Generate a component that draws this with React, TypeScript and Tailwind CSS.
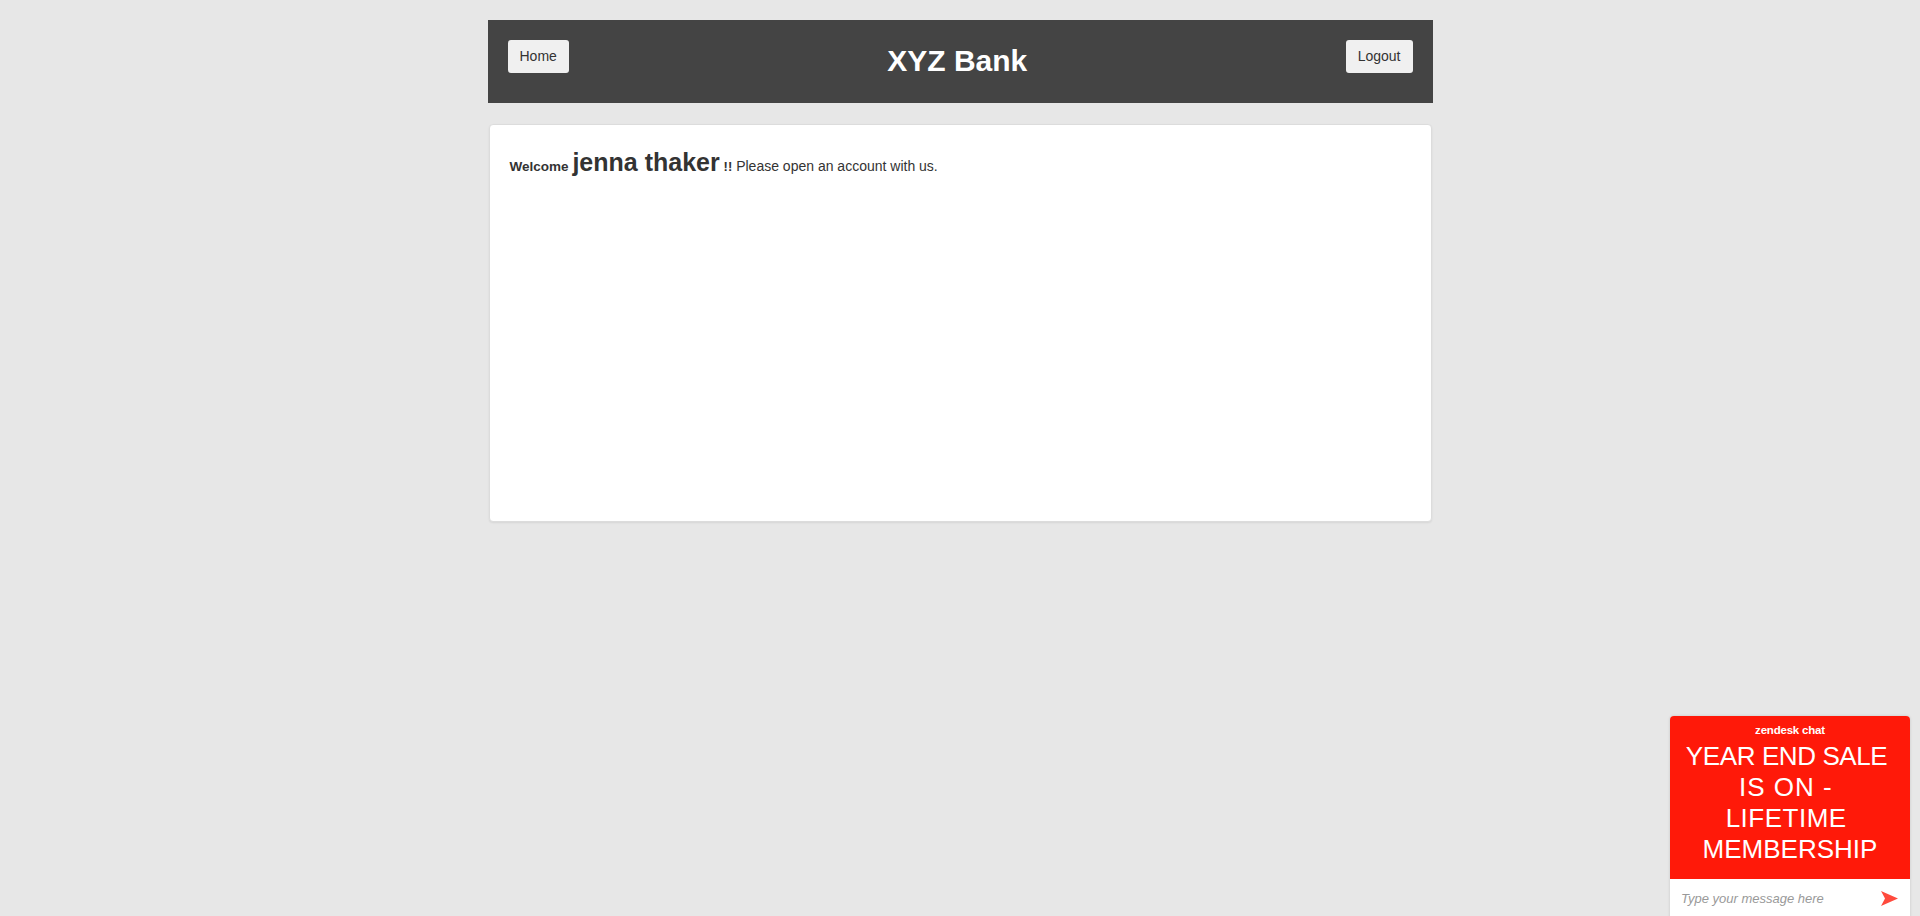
import React from 'react';

const ChatWidget: React.FC = () => {
  return (
    <div className="fixed right-[10px] top-[716px] w-[240px] rounded-t-[4px] overflow-hidden shadow-[0_0_3px_rgba(0,0,0,0.15)]">
      <div className="bg-[#ff1909] h-[163px] text-white text-center">
        <div className="pt-[7px] text-[11.5px] font-bold leading-[14px] tracking-[-0.2px]">zendesk chat</div>
        <div className="mt-[4px] text-[26px] leading-[31px]">
          <div className="tracking-[-0.4px]">YEAR END SALE&nbsp;</div>
          <div className="tracking-[1px]">IS ON -&nbsp;</div>
          <div className="tracking-[0.5px]">LIFETIME&nbsp;</div>
          <div>MEMBERSHIP</div>
        </div>
      </div>
      <div className="bg-white h-[40px] flex items-center pl-[11px] pr-[12px]">
        <span className="flex-1 text-[13px] italic text-[#999]">Type your message here</span>
        <svg width="17" height="15" viewBox="0 0 17 15" className="mt-[-1px]">
          <path d="M0 0 L17 7.5 L0 15 L4 7.5 Z" fill="#ff4a3d" />
        </svg>
      </div>
    </div>
  );
};

export default function App() {
  return (
    <div className="min-h-[916px] bg-[#e7e7e7] font-['Liberation_Sans',Arial,sans-serif] text-[#333]">
      <div className="w-[945px] mx-auto pt-[20px]">
        <div className="bg-[#444444] h-[83px] flex items-start px-[20px] pt-[20px]">
          <button className="h-[33px] px-[12px] bg-[#f0f0f0] rounded-[3px] text-[14px] text-[#333]">Home</button>
          <h1 className="flex-1 text-center text-white text-[30px] font-bold leading-[33px] mt-[4px]">XYZ Bank</h1>
          <button className="h-[33px] px-[12px] bg-[#f0f0f0] rounded-[3px] text-[14px] text-[#333]">Logout</button>
        </div>
        <div className="mt-[21px] mx-[1px] h-[398px] bg-white border border-[#dcdcdc] rounded-[4px] shadow-[0_1px_2px_rgba(0,0,0,0.08)] px-[20px] pt-[25px]">
          <div className="leading-none text-[14px]">
            <span className="text-[13.5px] font-bold">Welcome</span>{' '}
            <span className="text-[25px] font-bold">jenna thaker</span>{' '}
            <span className="text-[13px] font-bold">!!</span>{' '}
            <span>Please open an account with us.</span>
          </div>
        </div>
      </div>
      <ChatWidget />
    </div>
  );
}
